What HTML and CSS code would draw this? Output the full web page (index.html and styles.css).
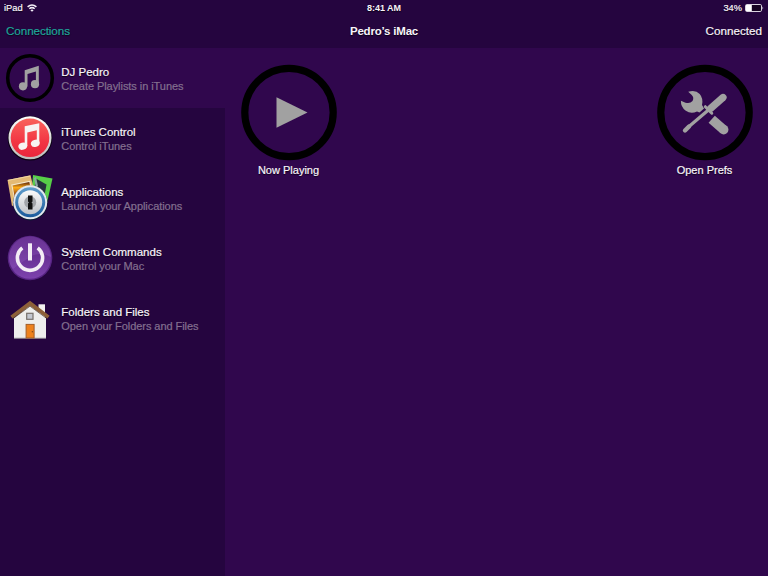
FILE: index.html
```html
<!DOCTYPE html>
<html lang="en">
<head>
<meta charset="utf-8">
<title>Pedro’s iMac</title>
<link rel="stylesheet" href="styles.css">
</head>
<body>
<div class="app">
  <header class="top">
    <div class="status">
      <div class="status-left"><span class="device">iPad</span>
        <svg width="10" height="8" viewBox="0 0 10 8" fill="none" stroke="#f4eff8" stroke-width="1.5"><path d="M.6 2.9Q5-1 9.4 2.9M2.3 4.8Q5 2.5 7.7 4.8"/><path d="M5 7.8 3.4 6.2Q5 5 6.6 6.2Z" fill="#f4eff8" stroke="none"/></svg>
      </div>
      <div class="clock">8:41 AM</div>
      <div class="status-right"><span class="percent">34%</span>
        <svg width="19" height="8" viewBox="0 0 19 8"><rect x=".5" y=".5" width="16" height="7" rx="1.3" fill="#160222" stroke="#d9d2df"/><rect x="1" y="1" width="5.8" height="6" fill="#fff"/><path d="M17.5 2.500Q19 4 17.5 5.500Z" fill="#f4eff8"/></svg>
      </div>
    </div>
    <nav class="nav">
      <a class="back">Connections</a>
      <h1 class="title">Pedro’s iMac</h1>
      <span class="state">Connected</span>
    </nav>
  </header>
  <div class="body">
    <aside class="sidebar">
      <div class="row selected">
        <svg class="icon" viewBox="0 0 60 60">
          <circle cx="30" cy="28" r="22.3" fill="none" stroke="#000" stroke-width="3.5"/>
          <g fill="#a1a1a1"><path d="M24.7 20.2 38.8 15.7V34h-2.900V21.400L27.500 24V36.5h-2.800Z"/><circle cx="23" cy="36.3" r="4.100"/><circle cx="35" cy="34.2" r="4.100"/></g>
        </svg>
        <div class="label"><div class="name">DJ Pedro</div><div class="desc">Create Playlists in iTunes</div></div>
      </div>
      <div class="row">
        <svg class="icon" viewBox="0 0 60 60">
          <defs><linearGradient id="red" x1="0" y1="0" x2="0" y2="1"><stop offset="0" stop-color="#f9635b"/><stop offset=".6" stop-color="#f23543"/><stop offset="1" stop-color="#e8263c"/></linearGradient>
          <linearGradient id="rim" x1="0" y1="0" x2="0" y2="1"><stop offset="0" stop-color="#fff"/><stop offset="1" stop-color="#bbb"/></linearGradient></defs>
          <circle cx="30" cy="28.3" r="22.3" fill="#090111"/>
          <circle cx="30" cy="27.8" r="21.5" fill="url(#rim)"/><circle cx="30" cy="27.8" r="19.3" fill="url(#red)"/>
          <g fill="#f7f4f2"><path d="M24.7 16.2 39.3 13.3V33h-2.5V20.2L27.3 22.500V36h-2.6Z"/><ellipse cx="22.800" cy="36.2" rx="4.5" ry="3.5" transform="rotate(-18 22.8 36.2)"/><ellipse cx="35.3" cy="33.3" rx="4.5" ry="3.5" transform="rotate(-18 35.3 33.3)"/></g>
        </svg>
        <div class="label"><div class="name">iTunes Control</div><div class="desc">Control iTunes</div></div>
      </div>
      <div class="row">
        <svg class="icon" viewBox="0 0 60 60">
          <defs><linearGradient id="flame" x1="0" y1="0" x2="0" y2="1"><stop offset="0" stop-color="#57200b"/><stop offset=".4" stop-color="#ffae19"/><stop offset="1" stop-color="#803010"/></linearGradient>
          <linearGradient id="blue" x1="0" y1="0" x2="0" y2="1"><stop offset="0" stop-color="#5f9ccb"/><stop offset="1" stop-color="#1b5b9c"/></linearGradient>
          <linearGradient id="disc" x1="0" y1="0" x2="0" y2="1"><stop offset="0" stop-color="#fbfbfb"/><stop offset="1" stop-color="#bfc3c8"/></linearGradient></defs>
          <path d="M33 5 52.500 8.400 46.500 35 31 31Z" fill="#57ce48"/>
          <path d="M35 14 36.3 8.800 46.500 14.500 44 28 34 20Z" fill="#26333d"/><path d="m34 8 2-1 2 9-2 2Z" fill="#8ba8a1"/>
          <path d="M7.5 10 30.500 5.300 36 27 12 36Z" fill="#e4ba75"/><path d="M8 10.400 30.300 6" stroke="#f2d7a2"/>
          <path d="m11.200 14.500 19-3.800 3 13-19 5Z" fill="#f4e7ca"/><path d="m12.500 15.400 16.800-3.400 2.200 10-17 4Z" fill="url(#flame)"/>
          <circle cx="30.2" cy="33.100" r="17.300" fill="#0c1a31"/><circle cx="30.2" cy="32.300" r="17" fill="#e4e8ed"/><circle cx="30.2" cy="32.300" r="15" fill="url(#blue)"/><circle cx="30.2" cy="32.300" r="12" fill="url(#disc)"/>
          <circle cx="30.2" cy="32.300" r="6" fill="#a2a5a9"/>
          <path d="M28 25.500h4.500v6l-1 1 1 1v6H28v-6l1-1-1-1Z" fill="#111"/>
        </svg>
        <div class="label"><div class="name">Applications</div><div class="desc">Launch your Applications</div></div>
      </div>
      <div class="row">
        <svg class="icon" viewBox="0 0 60 60">
          <defs><linearGradient id="violet" x1="0" y1="0" x2="0" y2="1"><stop offset="0" stop-color="#562080"/><stop offset="1" stop-color="#7d43ad"/></linearGradient></defs>
          <circle cx="30" cy="28" r="22.300" fill="#572483"/><circle cx="30" cy="27.800" r="21" fill="url(#violet)"/>
          <path d="M9 28a21 21 0 0 1 42-1Q38 20 27 29 19 34 13 39 9 34 9 28Z" fill="#a46bd0" opacity=".25"/>
          <path d="M22.300 17.800a12.600 12.600 0 1 0 15.400 0" fill="none" stroke="#f3edf5" stroke-width="3.600"/><path d="M30 13.300V30.500" stroke="#f3edf5" stroke-width="4"/>
        </svg>
        <div class="label"><div class="name">System Commands</div><div class="desc">Control your Mac</div></div>
      </div>
      <div class="row">
        <svg class="icon" viewBox="0 0 60 60"><g transform="translate(0 10)">
          <path d="M38.500 4.300H45V20h-6.500Z" fill="#f3f2ef"/>
          <path d="M14 18 30 5 46 18V38H14Z" fill="#eeeeec"/><path d="M14 38.200H46" stroke="#a8a5a7"/>
          <path d="m30 .8 19.600 14.900-2.200 2.800L30 5.800 12.600 18.500l-2.200-2.800Z" fill="#8d6038"/><path d="m13.200 18.500L30 6.200l16.800 12.300" fill="none" stroke="#4e3826" stroke-width=".7"/>
          <rect x="26.700" y="13.300" width="6.300" height="6" fill="#c4c8d0" stroke="#77716b" stroke-width="1.200"/>
          <rect x="26.100" y="24.400" width="8" height="13.600" fill="#ed811c" stroke="#a15e29"/><path d="M32.300 31v1.400" stroke="#70401b"/>
        </g></svg>
        <div class="label"><div class="name">Folders and Files</div><div class="desc">Open your Folders and Files</div></div>
      </div>
    </aside>
    <main class="main">
      <div class="tile">
        <svg width="96" height="97" viewBox="0 -.5 96 97"><circle cx="48" cy="48" r="44.200" fill="none" stroke="#000" stroke-width="7.200"/><path d="M35.500 32.700 66.500 48 35.500 63.300Z" fill="#a1a1a1"/></svg>
        <div class="caption">Now Playing</div>
      </div>
      <div class="tile">
        <svg width="96" height="97" viewBox="0 -.5 96 97"><circle cx="48" cy="48" r="44.200" fill="none" stroke="#000" stroke-width="7.200"/>
          <path d="M31.200 27.300Q38.500 25 42.700 29.500 46.500 34 45 40.500L47 44 42.500 48 40 47Q34 50 28.800 46.300 23.700 42.500 23.900 36.200L28.500 38.200Q33 39.500 35.500 36.500 37.500 33 34.500 30.300Z" fill="#a1a1a1"/>
          <path d="m54.700 54.800 12 10.500" stroke="#a1a1a1" stroke-width="9.500"/><circle cx="66.700" cy="65.200" r="4.750" fill="#a1a1a1"/>
          <g fill="none" stroke="#30074d" stroke-linecap="round"><path d="M66 33 53.500 44" stroke-width="10.500"/><path d="M50 46.500 29 65" stroke-width="6.500"/></g>
          <g fill="none" stroke="#a1a1a1" stroke-linecap="round"><path d="M66 33 53.500 44" stroke-width="7.200"/><path d="M52 45 32 62" stroke-width="3.200"/><path d="M32 62 28 66" stroke-width="4.400"/><path d="m48.300 42.200 6.500 6.500" stroke-width="3"/></g>
        </svg>
        <div class="caption">Open Prefs</div>
      </div>
    </main>
  </div>
</div>
</body>
</html>
```
FILE: styles.css
```css
* { box-sizing: border-box; }
body { margin: 0; font-family: "Liberation Sans", Arial, sans-serif; color: #f8f4fa; background: #30074d; -webkit-text-stroke: .2px; }
svg { display: block; flex: none; }
.app { width: 768px; height: 576px; display: flex; flex-direction: column; overflow: hidden; }
.top { height: 48px; background: #25053f; text-shadow: 0 1px 1px #0b0114; }
.status { height: 16px; display: grid; grid-template-columns: 1fr auto 1fr; align-items: center; font-size: 9.3px; line-height: 16px; padding: 0 4px; }
.status-left, .status-right { display: flex; align-items: center; gap: 4px; }
.status-right { justify-content: flex-end; gap: 3px; }
.clock { font-weight: bold; font-size: 9px; -webkit-text-stroke: 0; }
.nav { height: 30px; display: grid; grid-template-columns: 1fr auto 1fr; align-items: center; padding: 0 6px; font-size: 11.7px; line-height: 30px; }
.back { color: #1fa69b; letter-spacing: -.1px; }
.title { margin: 0; font-size: 11.5px; letter-spacing: -.2px; -webkit-text-stroke: 0; }
.state { text-align: right; }
.body { flex: 1; display: flex; }
.sidebar { width: 225px; background: #25053f; }
.row { height: 60px; display: flex; }
.selected { background: #30074d; }
.icon { width: 60px; height: 60px; margin-top: 2px; }
.label { padding: 17px 0 0 1.3px; white-space: nowrap; }
.name { font-size: 11.5px; line-height: 14px; text-shadow: 0 1px 1px #0b0114; }
.desc { font-size: 11px; line-height: 14px; letter-spacing: -.06px; color: #83708f; }
.main { flex: 1; display: flex; justify-content: space-between; align-items: flex-start; padding: 16px 15px 0 16px; }
.tile { width: 96px; }
.caption { font-size: 11px; line-height: 14px; margin-top: 2px; padding-right: 1px; text-align: center; text-shadow: 0 1px 1px #0b0114; }
```
